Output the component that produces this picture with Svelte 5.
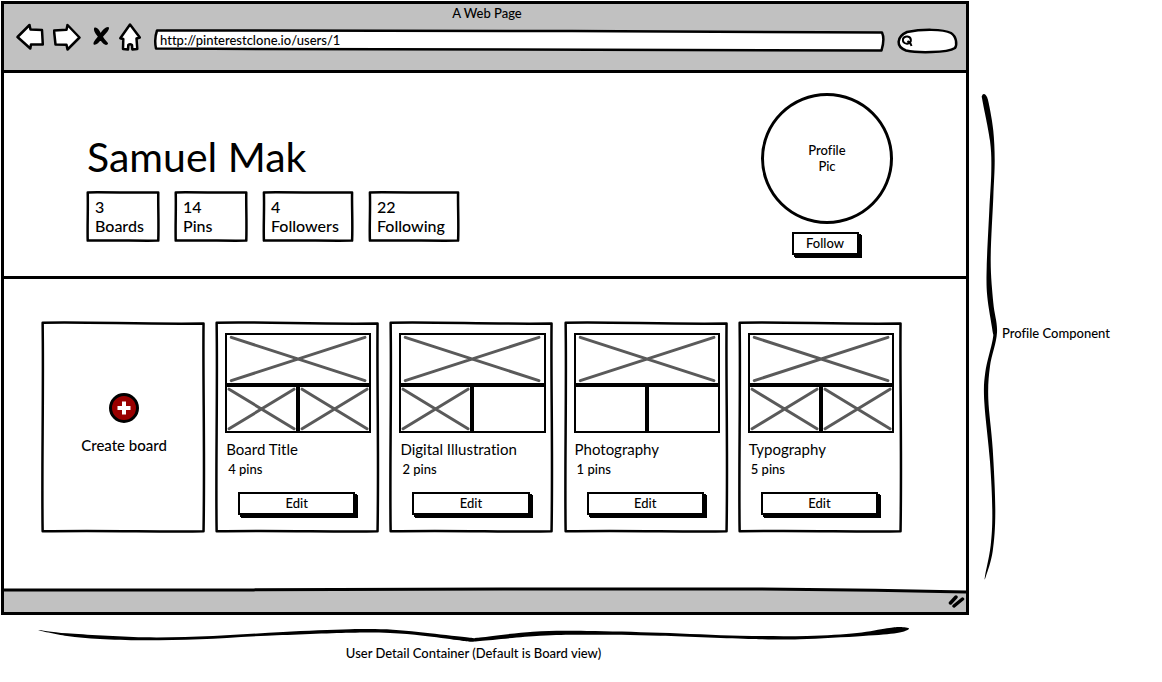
<script>
  const stats = [
    { count: 3, label: 'Boards' },
    { count: 14, label: 'Pins' },
    { count: 4, label: 'Followers', wide: true },
    { count: 22, label: 'Following', wide: true }
  ];

  // `filled` is the number of thumbnails that hold a picture, out of three
  const boards = [
    { title: 'Board Title', pins: 4, filled: 3 },
    { title: 'Digital Illustration', pins: 2, filled: 2 },
    { title: 'Photography', pins: 1, filled: 1 },
    { title: 'Typography', pins: 5, filled: 3 }
  ];

  let url = $state('http://pinterestclone.io/users/1');
  let query = $state('');

  // Closed outline through a list of points, rounded with Catmull-Rom curves
  function smooth(points) {
    const n = points.length;
    const at = (i) => points[(i + n) % n];
    let d = `M${at(0)}`;
    for (let i = 0; i < n; i++) {
      const [a, b, c, e] = [at(i - 1), at(i), at(i + 1), at(i + 2)];
      const p = [b[0] + (c[0] - a[0]) / 6, b[1] + (c[1] - a[1]) / 6];
      const q = [c[0] - (e[0] - b[0]) / 6, c[1] - (e[1] - b[1]) / 6];
      d += `C${p} ${q} ${c}`;
    }
    return d + 'Z';
  }

  const sideBrace = smooth([
    [3, 1], [6, 4], [8.5, 14], [12.3, 38], [13.7, 68], [12.3, 105], [9.7, 168], [12.3, 211], [16, 241],
    [9, 275], [7.3, 308], [11.7, 358], [14.3, 421], [11.7, 461], [5, 486], [4, 486], [9.7, 455],
    [11.3, 421], [9, 371], [3.3, 311], [4.3, 281], [11.7, 248], [11.3, 238], [6.3, 205],
    [5.7, 175], [8.3, 118], [10.3, 78], [9, 48], [1.5, 8], [1, 3]
  ]);
  const bottomBrace = smooth([
    [2, 5], [31, 8.3], [107, 12.3], [177, 11], [247, 7], [314, 4.3], [357, 4.7], [394, 8.3],
    [434, 12.7], [444, 12.5], [497, 6.7], [551, 6], [624, 7.7], [704, 10.7], [771, 11], [821, 8],
    [851, 3.3], [864, 2], [873, 3.7], [861, 8], [827, 11], [764, 14.3], [717, 14], [624, 10.7],
    [551, 9.7], [504, 10.7], [444, 16], [434, 16.7], [421, 15], [387, 10.7], [354, 8], [314, 7.7],
    [231, 10.7], [164, 14.3], [107, 15.3], [64, 14], [31, 11]
  ]);
</script>

{#snippet sketchFrame()}
  <svg class="frame" viewBox="0 0 100 100" preserveAspectRatio="none" aria-hidden="true">
    <path d="M1 .8 C30 .3 60 1.600 99 1.200 C98.600 30 99.800 60 99 99.200 C70 99.600 40 98.600 1 99.200 C.4 70 1.600 35 1 .8Z" />
  </svg>
{/snippet}

{#snippet thumb(filled)}
  <svg class="thumb" viewBox="0 0 100 100" preserveAspectRatio="none" aria-hidden="true">
    {#if filled}
      <path d="M3 5 L97 95 M97 5 L3 95" />
    {/if}
  </svg>
{/snippet}

<div class="page">
  <div class="browser">
    <header class="chrome">
      <div class="window-title">A Web Page</div>
      <div class="toolbar">
        <button class="tool" aria-label="Back">
          <svg width="28" height="28" viewBox="0 0 28 28">
            <path class="outline" d="M1.5 14 L13.5 2 L14.5 6.5 L26 7 L26.8 21.5 L15 21.5 L14.3 25.5 Z" />
          </svg>
        </button>
        <button class="tool" aria-label="Forward">
          <svg width="28" height="28" viewBox="0 0 28 28">
            <path class="outline" d="M26.500 14.500 L14.500 2 L13.500 6.800 L1 7.500 L2.500 21.500 L13.500 21.800 L14.500 26.500 Z" />
          </svg>
        </button>
        <button class="tool" aria-label="Stop">
          <svg width="20" height="28" viewBox="0 0 20 28">
            <path
              class="stop"
              d="M5 5.500 C7 5 8.500 8 11 12.500 C13 16 15 18.500 17 20.500 C15.500 22 13 19.500 10.500 15.500 C7.500 11.500 4 8 5 5.500Z M18 5 C18.500 7 15 9.500 12 13.500 C9.500 17 8 20.500 4.500 20.800 C3.500 19 7.500 16 10 12.500 C12.500 8.500 15 5 18 5Z"
            />
          </svg>
        </button>
        <button class="tool" aria-label="Home">
          <svg width="22" height="28" viewBox="0 0 22 28">
            <path
              class="outline"
              d="M11 1.500 L20.800 14.500 L17.500 15.500 L18.300 26 L13.300 26.500 L13 22 Q11 20.500 9.300 22 L9 26.500 L4 26 L4.300 16 L1.300 15.200 Z"
            />
          </svg>
        </button>
        <label class="address">
          <svg class="frame" viewBox="0 0 728 20" preserveAspectRatio="none" aria-hidden="true">
            <path d="M3 .5 C200 0 500 1 726 2.500 Q729 9 725.500 20.500 C500 21 250 20 2 18.500 Q0 9 3 .5Z" />
          </svg>
          <input type="text" aria-label="Address" bind:value={url} />
        </label>
        <label class="search">
          <svg class="frame" viewBox="0 0 61 24" preserveAspectRatio="none" aria-hidden="true">
            <path d="M10 3 C25 0 46 0 54 4 C60 8 60 16 58 19 C50 24 20 24 9 21.500 C-1 18 -1 8 10 3Z" />
          </svg>
          <svg class="glass" width="12" height="12" viewBox="0 0 12 12" aria-hidden="true">
            <path d="M5.500 1.500 A4 3.600 0 1 0 6 8.500 A4 3.600 0 0 0 5.500 1.500 M5.500 6 L8.500 8.500 L9.500 11" />
          </svg>
          <input type="search" aria-label="Search" bind:value={query} />
        </label>
      </div>
    </header>

    <section class="profile">
      <div class="identity">
        <h1>Samuel Mak</h1>
        <ul class="stats">
          {#each stats as stat}
            <li class:wide={stat.wide}>
              {@render sketchFrame()}
              <span>{stat.count}</span>
              <span>{stat.label}</span>
            </li>
          {/each}
        </ul>
      </div>
      <div class="picture">
        <div class="avatar">Profile<br />Pic</div>
        <button class="action follow">Follow</button>
      </div>
    </section>

    <section class="boards">
      <article class="card create">
        {@render sketchFrame()}
        <button class="add">
          <svg width="30" height="30" viewBox="0 0 30 30" aria-hidden="true">
            <circle cx="15" cy="15" r="13.500" fill="#990000" stroke="#000" stroke-width="3" />
            <path d="M15 8.500 V21.500 M8.500 15 H21.500" stroke="#fff" stroke-width="4" />
          </svg>
          <span>Create board</span>
        </button>
      </article>
      {#each boards as board}
        <article class="card">
          {@render sketchFrame()}
          <div class="thumbs">
            {@render thumb(board.filled > 0)}
            {@render thumb(board.filled > 1)}
            {@render thumb(board.filled > 2)}
          </div>
          <h2>{board.title}</h2>
          <p>{board.pins} pins</p>
          <button class="action edit">Edit</button>
        </article>
      {/each}
    </section>

    <footer class="status">
      <svg class="edge" viewBox="0 0 964 6" preserveAspectRatio="none" aria-hidden="true">
        <path class="fill" d="M0 2 C200 3 300 1 500 1 C700 1 800 0 964 4 V6 H0Z" />
        <path class="line" d="M0 2 C200 3 300 1 500 1 C700 1 800 0 964 4" />
      </svg>
      <svg class="grip" width="18" height="14" viewBox="0 0 18 14" aria-hidden="true">
        <path d="M3.500 9 L9 3 M7 12 L15.500 5" />
      </svg>
    </footer>
  </div>

  <aside class="side-note">
    <svg width="18" height="487" viewBox="0 0 18 490" preserveAspectRatio="none" aria-hidden="true">
      <path d={sideBrace} />
    </svg>
    <span>Profile Component</span>
  </aside>

  <div class="bottom-note">
    <svg viewBox="0 0 875 18" preserveAspectRatio="none" aria-hidden="true"><path d={bottomBrace} /></svg>
    <span>User Detail Container (Default is Board view)</span>
  </div>
</div>

<style>
  :global(body) {
    background: #fff;
  }

  .page {
    display: grid;
    grid-template-columns: minmax(0, 1fr) 193px;
    align-items: start;
    padding-top: 1px;
    color: #000;
    font: 13px/16px Lato, 'Open Sans', sans-serif;
    font-weight: 500;
    font-variant-ligatures: none;
  }

  button,
  input {
    margin: 0;
    padding: 0;
    border: 0;
    background: none;
    color: inherit;
    font: inherit;
    font-variant-ligatures: none;
  }

  svg {
    display: block;
  }

  .browser {
    margin-left: 1px;
    border: 3px solid #000;
  }

  .chrome {
    padding: 1px 8px 17px 12px;
    border-bottom: 3px solid #000;
    background: #c1c1c1;
  }

  .window-title {
    text-align: center;
  }

  .toolbar {
    display: flex;
    align-items: center;
    gap: 9px;
    height: 32px;
  }

  .tool {
    flex: none;
  }

  .outline {
    fill: #fff;
    stroke: #000;
    stroke-width: 2.5;
    stroke-linejoin: round;
  }

  .stop {
    stroke: #000;
    stroke-width: 2;
    stroke-linejoin: round;
  }

  .frame {
    position: absolute;
    inset: 0;
    width: 100%;
    height: 100%;
    overflow: visible;
  }

  .frame path {
    fill: #fff;
    stroke: #000;
    stroke-width: 2.5;
    stroke-linejoin: round;
    vector-effect: non-scaling-stroke;
  }

  .address,
  .search {
    position: relative;
    display: flex;
    align-items: center;
    margin-top: 8px;
  }

  .address {
    flex: 1;
    height: 20px;
    margin-top: 6px;
    margin-left: 4px;
    padding-left: 6px;
  }

  .address input,
  .search input {
    position: relative;
    width: 100%;
    min-width: 0;
    outline: none;
  }

  .search {
    width: 61px;
    height: 24px;
    margin-left: 4px;
    padding: 0 6px 0 5px;
    box-sizing: border-box;
  }

  .glass {
    position: relative;
    flex: none;
    fill: none;
    stroke: #000;
    stroke-width: 2;
  }

  .profile {
    display: flex;
    justify-content: space-between;
    padding: 20px 73px 21px 83px;
    border-bottom: 3px solid #000;
  }

  h1 {
    margin: 40px 0 11px;
    font-size: 41px;
    font-weight: 400;
    line-height: 48px;
  }

  .stats {
    display: flex;
    gap: 16px;
    margin: 0;
    padding: 0;
    list-style: none;
  }

  .stats li {
    position: relative;
    display: flex;
    flex-direction: column;
    box-sizing: border-box;
    min-width: 72px;
    height: 49px;
    padding: 5px 8px;
    font-size: 16px;
    line-height: 19px;
  }

  .stats .wide {
    min-width: 90px;
  }

  .stats span {
    position: relative;
  }

  .picture {
    display: flex;
    flex-direction: column;
    align-items: center;
    gap: 8px;
  }

  .avatar {
    display: flex;
    align-items: center;
    justify-content: center;
    box-sizing: border-box;
    width: 132px;
    height: 131px;
    padding-bottom: 2px;
    border: 3px solid #000;
    border-radius: 50%;
    text-align: center;
  }

  .action {
    height: 23px;
    border: 2px solid #000;
    background: #fff;
    box-shadow: 2px 2px 0 #000, 3px 3px 0 #000;
    line-height: 19px;
  }

  .follow {
    width: 67px;
    margin-right: 4px;
  }

  .boards {
    display: grid;
    grid-template-columns: repeat(5, minmax(0, 1fr));
    gap: 10px;
    padding: 42px 64px 55px 37px;
  }

  .card {
    position: relative;
    display: flex;
    flex-direction: column;
    box-sizing: border-box;
    height: 212px;
    padding: 12px 8px 18px 10px;
  }

  .create {
    align-items: center;
    justify-content: center;
  }

  .add {
    position: relative;
    display: flex;
    flex-direction: column;
    align-items: center;
    gap: 12px;
    font-size: 15px;
    line-height: 20px;
  }

  .thumbs {
    position: relative;
    display: grid;
    grid-template-columns: 1fr 1fr;
    grid-template-rows: 52px 48px;
  }

  .thumb {
    box-sizing: border-box;
    width: 100%;
    height: 100%;
    border: 2px solid #000;
  }

  .thumb:first-child {
    grid-column: span 2;
  }

  .thumb path {
    fill: none;
    stroke: #5a5a5a;
    stroke-width: 3;
    stroke-linecap: round;
    vector-effect: non-scaling-stroke;
  }

  .card h2,
  .card p {
    position: relative;
    margin: 0 1px;
    line-height: 20px;
  }

  .card h2 {
    margin-top: 6px;
    font-size: 15px;
    font-weight: 400;
    white-space: nowrap;
  }

  .card p {
    padding-left: 2px;
  }

  .edit {
    position: relative;
    margin: auto 16px 0 13px;
  }

  .status {
    display: flex;
    flex-direction: column;
    align-items: flex-end;
    height: 24px;
    background: #c1c1c1;
  }

  .edge {
    width: 100%;
    height: 6px;
    overflow: visible;
    background: #fff;
  }

  .edge .fill {
    fill: #c1c1c1;
  }

  .edge .line {
    fill: none;
    stroke: #000;
    stroke-width: 3;
    vector-effect: non-scaling-stroke;
  }

  .grip {
    margin-right: 1px;
  }

  .grip path {
    fill: none;
    stroke: #000;
    stroke-width: 3.5;
    stroke-linecap: round;
  }

  .side-note {
    display: flex;
    align-items: center;
    gap: 3px;
    padding: 92px 0 0 12px;
  }

  .side-note span {
    padding-bottom: 8px;
  }

  .bottom-note {
    display: flex;
    flex-direction: column;
    gap: 2px;
    margin-top: 10px;
    padding: 0 58px 0 36px;
    text-align: center;
  }

  .bottom-note svg {
    width: 100%;
    height: 18px;
  }
</style>
